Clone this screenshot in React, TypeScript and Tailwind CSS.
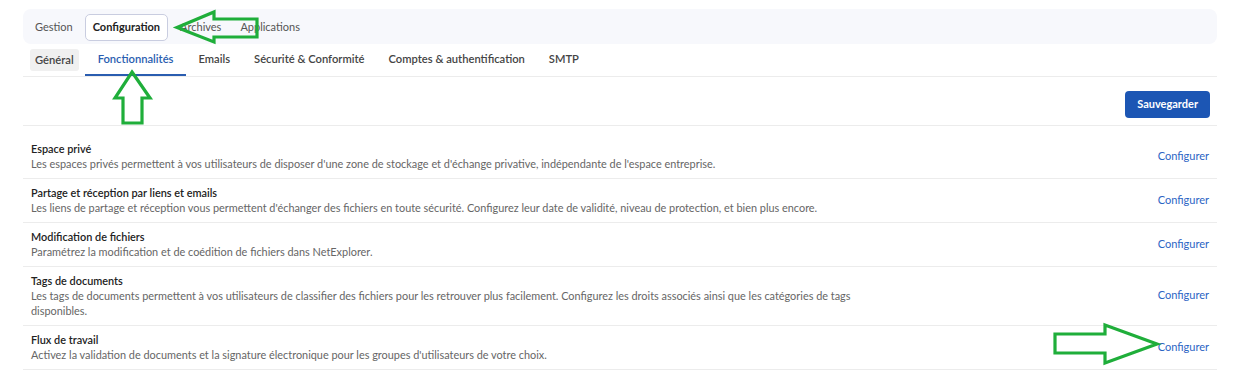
import React from "react";

const FONT = "font-['Lato','Open_Sans',sans-serif]";

const features = [
  {
    title: "Espace privé",
    desc: "Les espaces privés permettent à vos utilisateurs de disposer d'une zone de stockage et d'échange privative, indépendante de l'espace entreprise.",
  },
  {
    title: "Partage et réception par liens et emails",
    desc: "Les liens de partage et réception vous permettent d'échanger des fichiers en toute sécurité. Configurez leur date de validité, niveau de protection, et bien plus encore.",
  },
  {
    title: "Modification de fichiers",
    desc: "Paramétrez la modification et de coédition de fichiers dans NetExplorer.",
  },
  {
    title: "Tags de documents",
    desc: "Les tags de documents permettent à vos utilisateurs de classifier des fichiers pour les retrouver plus facilement. Configurez les droits associés ainsi que les catégories de tags disponibles.",
  },
  {
    title: "Flux de travail",
    desc: "Activez la validation de documents et la signature électronique pour les groupes d'utilisateurs de votre choix.",
  },
];

const subTabs = ["Emails", "Sécurité & Conformité", "Comptes & authentification", "SMTP"];

function Arrows() {
  return (
    <svg className="absolute left-0 top-0 pointer-events-none" width="1237" height="374">
      <g fill="none" stroke="#1fae3a" strokeWidth="3.2" strokeLinejoin="miter">
        <polygon points="177,27.5 214,12 214,19 257,19 257,37 214,37 214,42" />
        <polygon points="132,72 150,98 142,98 142,123 123,123 123,98 115,98" />
        <polygon points="1157,344 1105,363 1105,353 1055,353 1055,334 1105,334 1105,325" />
      </g>
    </svg>
  );
}

export default function App() {
  return (
    <div className={`relative w-full min-h-[374px] bg-white ${FONT} pl-[23px] pr-[20px] pt-[9px]`}>
      {/* Top navigation */}
      <nav className="flex items-center h-[35px] bg-[#f7f8fc] rounded-lg pl-[5px] pt-[2px] gap-[5px] text-[11px] text-[#555]">
        <span className="px-[7px]">Gestion</span>
        <span className="px-[7px] h-[27px] flex items-center bg-white border border-[#c9cde0] rounded-[5px] font-bold text-[#222]">
          Configuration
        </span>
        <span className="px-[7px]">Archives</span>
        <span className="px-[7px]">Applications</span>
      </nav>

      {/* Sub tabs */}
      <div className="flex items-end border-b border-[#ececec] text-[11.2px] font-semibold text-[#444]">
        <div className="h-[32px] flex items-center pl-[7px] pr-[6px]">
          <span className="h-[22px] px-[5px] flex items-center bg-[#f0f0f0] rounded-[3px]">Général</span>
        </div>
        <div className="h-[32px] flex items-center px-[13px] border-b-2 border-[#2a5db0] text-[#2a5db0]">
          Fonctionnalités
        </div>
        {subTabs.map((t) => (
          <div key={t} className="h-[32px] flex items-center px-[12px] border-b-2 border-transparent">
            {t}
          </div>
        ))}
      </div>

      {/* Save */}
      <div className="flex justify-end pt-[14px] pb-[7px] pr-[7px] border-b border-[#ececec]">
        <button className="h-[27px] px-[12px] bg-[#1c56b4] rounded-[4px] text-white text-[11px] font-bold">
          Sauvegarder
        </button>
      </div>

      {/* Features */}
      <div className="pt-[9px]">
        {features.map((f) => (
          <div key={f.title} className="flex items-center justify-between pt-[6px] pb-[7px] px-[8px] border-b border-[#ececec]">
            <div className="max-w-[840px] text-[10.9px] leading-[15px]">
              <div className="font-semibold text-[#222]">{f.title}</div>
              <div className="text-[#666]">{f.desc}</div>
            </div>
            <a className="text-[11px] text-[#2c64c4]">Configurer</a>
          </div>
        ))}
      </div>

      <Arrows />
    </div>
  );
}
